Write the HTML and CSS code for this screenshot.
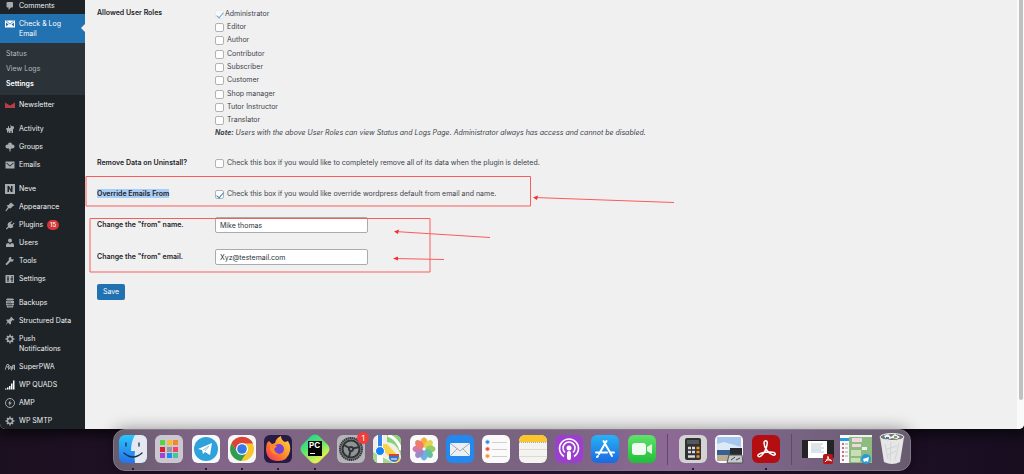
FILE: index.html
```html
<!DOCTYPE html>
<html lang="en">
<head>
<meta charset="utf-8">
<title>Check &amp; Log Email Settings</title>
<link rel="stylesheet" href="styles.css">
</head>
<body>
<div class="window">
  <nav class="menu" aria-label="Admin menu">
    <a class="item" href="#"><svg class="ico" viewBox="0 0 20 20"><path d="M5 2h9q2 0 2 2v7q0 2-2 2h-2l-5 5v-5H5q-2 0-2-2V4q0-2 2-2z"/></svg><span>Comments</span></a>
    <a class="item current" href="#"><svg class="ico" viewBox="0 0 20 20"><path fill-rule="evenodd" d="M0 3h20v14H0zM2 4l8 7 8-7-1-.5-7 6-7-6zM2 7v8l5-4zM18 7v8l-5-4z"/></svg><span>Check &amp; Log Email</span></a>
    <div class="submenu">
      <a href="#">Status</a>
      <a href="#">View Logs</a>
      <a class="active" href="#">Settings</a>
    </div>
    <a class="item" href="#"><svg class="ico news" viewBox="0 0 20 20"><path d="M0 5l10 6 10-6v11H0z"/></svg><span>Newsletter</span></a>

    <a class="item first" href="#"><svg class="ico" viewBox="0 0 20 20"><path d="M11 1l2 3 5 1v4l-2 1v8h-3v-4h-2v4H8v-4H7v3H4v-5l-2-1 1-3h3V4l2 1v3h3z"/></svg><span>Activity</span></a>
    <a class="item" href="#"><svg class="ico" viewBox="0 0 20 20"><circle cx="10" cy="5" r="4"/><circle cx="5" cy="9" r="4"/><circle cx="15" cy="9" r="4"/><path d="M7 8h6v5l-2 2v4H9v-4l-2-2z"/></svg><span>Groups</span></a>
    <a class="item" href="#"><svg class="ico" viewBox="0 0 20 20"><path fill-rule="evenodd" d="M1 3h18v14H1zM3 5v2l7 6 7-6V5l-7 6z"/></svg><span>Emails</span></a>

    <a class="item first" href="#"><svg class="ico" viewBox="0 0 20 20"><path fill-rule="evenodd" d="M0 0h20v20H0zM5 4v12h3V9l4 7h3V4h-3v7L8 4z"/></svg><span>Neve</span></a>
    <a class="item" href="#"><svg class="ico" viewBox="0 0 20 20"><path d="M12 1l7 6-3 1-5 5-3-1-6 7-1-2 5-7-3-3 4-1z"/></svg><span>Appearance</span></a>
    <a class="item" href="#"><svg class="ico" viewBox="0 0 20 20"><path d="M12 2l2 1-3 4 3 2 4-4 1 2-4 4 2 2c-3 4-7 4-9 2l-5 4-1-2 4-4C4 9 6 5 9 4l1 1z"/></svg><span>Plugins <b class="badge">15</b></span></a>
    <a class="item" href="#"><svg class="ico" viewBox="0 0 20 20"><circle cx="10" cy="5" r="4"/><path d="M2 18v-4q0-4 5-4l3 3 3-3q5 0 5 4v4z"/></svg><span>Users</span></a>
    <a class="item" href="#"><svg class="ico" viewBox="0 0 20 20"><path d="M17 6l-3 1-2-2 1-3c-4-1-7 2-5 6l-7 8q1 3 3 2l7-7c4 1 7-1 6-5z"/></svg><span>Tools</span></a>
    <a class="item" href="#"><svg class="ico" viewBox="0 0 20 20"><path fill-rule="evenodd" d="M1 2h17v16H1zM5 4v5H4v2h1v5h2v-5h1V9H7V4zM13 4v5h-2v2h2v5h2v-5h1V9h-1V4z"/></svg><span>Settings</span></a>

    <a class="item first" href="#"><svg class="ico" viewBox="0 0 20 20"><path d="M4 1h12l2 2-2 2H4L2 3zM2 6h16v4H2zM2 11h16v3H2zM3 15h14l-1 4H4z"/><path class="cut" d="M4 8h8M5 12h9M6 16h8"/></svg><span>Backups</span></a>
    <a class="item" href="#"><svg class="ico" viewBox="0 0 20 20"><path d="M12 1l7 7-2 1-2-1-3 4v4l-2 1-4-4-5 6 4-8-3-3 2-1h4l3-3z"/></svg><span>Structured Data</span></a>
    <a class="item" href="#"><svg class="ico" viewBox="0 0 20 20"><circle class="ring" cx="10" cy="10" r="5"/><path class="teeth" d="M10 1v4M10 15v4M1 10h4M15 10h4M4 4l2 2M14 14l2 2M16 4l-2 2M6 14l-2 2"/></svg><span>Push Notifications</span></a>
    <a class="item" href="#"><svg class="ico" viewBox="0 0 20 20"><path class="pwa" d="M0 16L4 5h3q2 3-1 5H3M8 6l-1 9 5-7v7l4-9M13 17l4-11h2v10M14 12h5"/></svg><span>SuperPWA</span></a>
    <a class="item" href="#"><svg class="ico bars" viewBox="0 0 20 20"><path d="M0 17h3v2H0zM4 15h3v4H4zM8 12h3v7H8zM12 7h3v12h-3zM16 1h3v18h-3z"/></svg><span>WP QUADS</span></a>
    <a class="item" href="#"><svg class="ico" viewBox="0 0 20 20"><circle class="thin" cx="10" cy="10" r="9"/><path d="M11 4l-5 7h3l-1 5 6-7h-4z"/></svg><span>AMP</span></a>
    <a class="item" href="#"><svg class="ico" viewBox="0 0 20 20"><circle class="ring" cx="10" cy="10" r="5"/><path class="teeth" d="M10 1v4M10 15v4M1 10h4M15 10h4M4 4l2 2M14 14l2 2M16 4l-2 2M6 14l-2 2"/></svg><span>WP SMTP</span></a>
  </nav>

  <main class="content">
    <form class="form">
      <div class="row top">
        <h2 class="head">Allowed User Roles</h2>
        <div>
          <div class="roles">
            <label class="check admin"><input type="checkbox" checked disabled>Administrator</label>
            <label class="check"><input type="checkbox">Editor</label>
            <label class="check"><input type="checkbox">Author</label>
            <label class="check"><input type="checkbox">Contributor</label>
            <label class="check"><input type="checkbox">Subscriber</label>
            <label class="check"><input type="checkbox">Customer</label>
            <label class="check"><input type="checkbox">Shop manager</label>
            <label class="check"><input type="checkbox">Tutor Instructor</label>
            <label class="check"><input type="checkbox">Translator</label>
          </div>
          <p class="note"><b>Note:</b> Users with the above User Roles can view Status and Logs Page. Administrator always has access and cannot be disabled.</p>
        </div>
      </div>
      <div class="row">
        <h2 class="head">Remove Data on Uninstall?</h2>
        <label class="check"><input type="checkbox">Check this box if you would like to completely remove all of its data when the plugin is deleted.</label>
      </div>
      <div class="row">
        <h2 class="head"><mark>Override Emails From</mark></h2>
        <label class="check"><input type="checkbox" checked>Check this box if you would like override wordpress default from email and name.</label>
      </div>
      <div class="row">
        <label class="head" for="from-name">Change the "from" name.</label>
        <input class="field" id="from-name" type="text" value="Mike thomas">
      </div>
      <div class="row">
        <label class="head" for="from-email">Change the "from" email.</label>
        <input class="field" id="from-email" type="text" value="Xyz@testemail.com">
      </div>
      <button class="save" type="button">Save</button>
    </form>
    <svg class="marks" width="620" height="300" viewBox="0 0 620 300" aria-hidden="true">
      <path class="box" d="M1 176.500h444.500v29.500H1zM5 218.500h340v53.500H5z"/>
      <path class="arrow" d="M449 197.500l140 5M310 231.500l95 6M309 258.500l50 1"/>
      <path class="tip" d="M448 197.500l5-2-1 4.500zM309 231.500l5-2-1 4.500zM308 258.500l5-2v4z"/>
    </svg>
  </main>
  <div class="scroll"><div class="thumb"></div></div>
</div>

<div class="shelf">
<div class="dock">
  <div class="apps main-apps">
    <a class="app open" href="#" aria-label="Finder"><svg viewBox="0 0 28 28"><defs><linearGradient id="g1" x2="0" y2="1"><stop stop-color="#2bc5fb"/><stop offset="1" stop-color="#2472ea"/></linearGradient><clipPath id="r"><rect width="28" height="28" rx="6"/></clipPath></defs><g clip-path="url(#r)"><path fill="url(#g1)" d="M0 0h28v28H0z"/><path fill="#e4e8f0" d="M16 0q-4 7-4 16h4q-1 6 0 12h12V0z"/><path d="M7 8v3M20 8v3M5 18q9 8 18 0" fill="none" stroke="#1d3048" stroke-width="1.300" stroke-linecap="round"/></g></svg></a>
    <a class="app" href="#" aria-label="Launchpad"><svg viewBox="0 0 28 28"><rect width="28" height="28" rx="6" fill="#ccc6d0"/><path fill="#54d44c" d="M5 5h5v5H5z"/><path fill="#f9bc2e" d="M12 5h5v5h-5z"/><path fill="#f28a25" d="M18 5h5v5h-5z"/><path fill="#d8222e" d="M5 12h5v5H5z"/><path fill="#96989e" d="M12 12h5v5h-5z"/><path fill="#f64266" d="M18 12h5v5h-5z"/><path fill="#a145d3" d="M5 18h5v5H5z"/><path fill="#1d8cf5" d="M12 18h5v5h-5z"/><path fill="#3ccc98" d="M18 18h5v5h-5z"/></svg></a>
    <a class="app open" href="#" aria-label="Telegram"><svg viewBox="0 0 28 28"><rect width="28" height="28" rx="6" fill="#f7f9fb"/><circle cx="14" cy="14" r="12" fill="#2fa2db"/><path fill="#fff" d="M6 14l14-6-2 12-5-3-2 2-1-4z"/><path d="M11 15l6-4-4 5" fill="none" stroke="#9cc8e0"/></svg></a>
    <a class="app open" href="#" aria-label="Chrome"><svg viewBox="0 0 28 28"><rect width="28" height="28" rx="6" fill="#f7f7f7"/><circle cx="14" cy="14" r="12" fill="#f6c72f"/><path fill="#dc4437" d="M3.500 8.500a12 12 0 0 1 21.500 0H14l-5 8z"/><path fill="#2f9d57" d="M3.500 8.500A12 12 0 0 0 13 26l6-9-10-1z"/><circle cx="14" cy="14" r="6" fill="#fff"/><circle cx="14" cy="14" r="4.800" fill="#3579e8"/></svg></a>
    <a class="app open" href="#" aria-label="Firefox"><svg viewBox="0 0 28 28"><defs><linearGradient id="g2" x1="1" x2="0" y2="1"><stop stop-color="#ffe14a"/><stop offset=".5" stop-color="#ff8a26"/><stop offset="1" stop-color="#f02b5f"/></linearGradient></defs><rect width="28" height="28" rx="6" fill="#251b45"/><path fill="url(#g2)" d="M3 8l2-2 3 3 3-1q1-5 6-7 0 4 4 6l3-1q3 5 2 10-2 10-12 10Q3 26 2 15q0-4 1-7z"/><circle cx="15" cy="14" r="5" fill="#7542d8"/><path fill="#ff8a26" d="M6 10l7 1-3 3q1 4 5 5-7 2-9-5z"/></svg></a>
    <a class="app open" href="#" aria-label="PyCharm"><svg viewBox="0 0 28 28"><defs><linearGradient id="g3" x2="1" y2=".3"><stop stop-color="#22d98c"/><stop offset=".5" stop-color="#5fe26c"/><stop offset="1" stop-color="#d8f054"/></linearGradient></defs><rect x="2" y="2" width="24" height="24" rx="6" transform="rotate(45 14 14)" fill="url(#g3)"/><path fill="#050505" d="M7 6h14v15H7z"/><text class="pc" x="8" y="13">PC</text><path fill="#fff" d="M9 18h5v1H9z"/></svg></a>
    <a class="app" href="#" aria-label="System Preferences, 1 notification"><svg viewBox="0 0 28 28"><rect width="28" height="28" rx="6" fill="#b3b5b7"/><circle cx="14" cy="14" r="11" fill="#85898c" stroke="#33383b" stroke-width="2" stroke-dasharray="1.500 .5"/><circle cx="14" cy="14" r="8.500" fill="#8e9396" stroke="#303437" stroke-width="2"/><path d="M14 14L7 10M14 14l8-2M14 14l-2 8" stroke="#303437" stroke-width="2"/><circle cx="14" cy="14" r="3" fill="#303437"/><circle cx="14" cy="14" r="1" fill="#9ba0a3"/></svg><span class="count">1</span></a>
    <a class="app" href="#" aria-label="Maps"><svg viewBox="0 0 28 28"><g clip-path="url(#r)"><path fill="#f0eee6" d="M0 0h28v28H0z"/><path fill="#88d276" d="M14 0h14v22Q25 8 14 7z"/><path d="M15 0q10 4 13 15" fill="none" stroke="#fff" stroke-width="3"/><path fill="#f8d34a" d="M10 9h4l14 15v4h-6L10 15z"/><path fill="#a4d989" d="M0 17l20 11H0z"/><path fill="#fff" d="M4 0h6v28H4z"/><path fill="#3084ee" d="M5 0h4v15H5z"/><circle cx="7" cy="16" r="4.500" fill="#1682f5" stroke="#fff"/><path fill="#3377c9" d="M16 20q5 1 10-1 1 7-5 8-6-1-5-7z"/><path fill="#dc403c" d="M16 19h10v2H16z"/><path stroke="#fff" d="M18 24h6"/></g></svg></a>
    <a class="app" href="#" aria-label="Photos"><svg viewBox="0 0 28 28"><rect width="28" height="28" rx="6" fill="#fafafa"/><g opacity=".85"><ellipse cx="14" cy="7.500" rx="3.500" ry="5" fill="#f6a023"/><ellipse cx="14" cy="7.500" rx="3.500" ry="5" fill="#dfcf32" transform="rotate(45 14 14)"/><ellipse cx="14" cy="7.500" rx="3.500" ry="5" fill="#86c34c" transform="rotate(90 14 14)"/><ellipse cx="14" cy="7.500" rx="3.500" ry="5" fill="#4bb592" transform="rotate(135 14 14)"/><ellipse cx="14" cy="7.500" rx="3.500" ry="5" fill="#58a2e1" transform="rotate(180 14 14)"/><ellipse cx="14" cy="7.500" rx="3.500" ry="5" fill="#8778c3" transform="rotate(225 14 14)"/><ellipse cx="14" cy="7.500" rx="3.500" ry="5" fill="#c764a1" transform="rotate(270 14 14)"/><ellipse cx="14" cy="7.500" rx="3.500" ry="5" fill="#ee6651" transform="rotate(315 14 14)"/></g></svg></a>
    <a class="app" href="#" aria-label="Mail"><svg viewBox="0 0 28 28"><rect width="28" height="28" rx="6" fill="#2489ef"/><rect x="4" y="8" width="20" height="13" rx="1.500" fill="#edf0f3"/><path d="M4.500 8.500L14 16l9.500-7.500M4.500 20.500l7-7M23.500 20.500l-7-7" fill="none" stroke="#a5adb7"/></svg></a>
    <a class="app" href="#" aria-label="Reminders"><svg viewBox="0 0 28 28"><rect width="28" height="28" rx="6" fill="#fafafa"/><path stroke="#cfcfcf" d="M10 7.500h15M10 14.500h15M10 21.500h15"/><circle cx="5.500" cy="7" r="2" fill="#2882f4" stroke="#acd0fb"/><circle cx="5.500" cy="14" r="2" fill="#ed463d" stroke="#f8b6b3"/><circle cx="5.500" cy="21" r="2" fill="#ee9530" stroke="#f8d4ad"/></svg></a>
    <a class="app" href="#" aria-label="Notes"><svg viewBox="0 0 28 28"><g clip-path="url(#r)"><path fill="#f4f3ef" d="M0 0h28v28H0z"/><path fill="#fbc62d" d="M0 0h28v7H0z"/><path stroke="#aaa598" stroke-dasharray="1 1" d="M0 7.500h28"/><path stroke="#dcdad5" d="M0 14.500h28M0 21.500h28"/></g></svg></a>
    <a class="app" href="#" aria-label="Podcasts"><svg viewBox="0 0 28 28"><rect width="28" height="28" rx="6" fill="#9c3fce"/><g fill="none" stroke="#fff" stroke-width="1.500"><path d="M9 21.500a9.500 9.500 0 1 1 10 0"/><path d="M10 17.500a6 6 0 1 1 8 0"/></g><circle cx="14" cy="13" r="2.500" fill="#fff"/><rect x="12" y="16" width="4" height="9" rx="2" fill="#fff"/></svg></a>
    <a class="app" href="#" aria-label="App Store"><svg viewBox="0 0 28 28"><defs><linearGradient id="g4" x2="0" y2="1"><stop stop-color="#28b2f4"/><stop offset="1" stop-color="#1b69df"/></linearGradient></defs><rect width="28" height="28" rx="6" fill="url(#g4)"/><path d="M15.500 6L8 19M12.500 6l8.500 15M5 17.500h11M20 17.500h3M7 21l-1 1" fill="none" stroke="#fff" stroke-width="2" stroke-linecap="round"/></svg></a>
    <a class="app" href="#" aria-label="FaceTime"><svg viewBox="0 0 28 28"><defs><linearGradient id="g5" x2="0" y2="1"><stop stop-color="#60e16a"/><stop offset="1" stop-color="#22bd3a"/></linearGradient></defs><rect width="28" height="28" rx="6" fill="url(#g5)"/><rect x="4" y="8" width="14" height="12" rx="3" fill="#f1faf1"/><path fill="#e0f5e2" d="M19 12l5-3v10l-5-3z"/></svg></a>
  </div>
  <span class="rule"></span>
  <div class="apps">
    <a class="app open" href="#" aria-label="Calculator"><svg viewBox="0 0 28 28"><rect width="28" height="28" rx="6" fill="#d3d3d3"/><rect x="6" y="3" width="16" height="22" rx="2" fill="#303133"/><path fill="#56595b" d="M8 5h12v4H8z"/><path d="M9 13h3M13 13h3M9 17h3M13 17h3M9 21.500h7" stroke="#d9d9d9" stroke-width="2.500"/><path d="M17.500 13h3M17.500 17h3M17.500 21.500h3" stroke="#f59323" stroke-width="2.500"/></svg></a>
    <a class="app" href="#" aria-label="Preview"><svg viewBox="0 0 28 28"><rect width="28" height="28" rx="5" fill="#f7f7f7"/><path fill="#a5c7ef" d="M2 2h24v13H2z"/><path fill="#dceaf8" d="M2 9l7-2 17 5v3H2z"/><path fill="#3a608f" d="M2 15h24v5H2z"/><path fill="#b9aa92" d="M2 20h24v6H2z"/><path fill="#26292d" d="M15 13h12v7H15z"/><path fill="#c5c9cb" stroke="#555" d="M14 20h13l1 8H12z"/><path stroke="#444" d="M16 25l4-3M21 25l4-2"/></svg></a>
    <a class="app open" href="#" aria-label="Acrobat"><svg viewBox="0 0 28 28"><rect width="28" height="28" rx="6" fill="#b30f12"/><path d="M13 6c3-1 3 3 0 10-3 5-6 7-7 5s5-4 12-4 6 4 3 3c-4-1-9-7-9-12q0-2 1-2z" fill="none" stroke="#fff" stroke-width="1.500"/></svg></a>
  </div>
  <span class="rule"></span>
  <div class="apps">
    <a class="app thumbnail" href="#" aria-label="Document window"><svg viewBox="0 0 32 28"><path fill="#242425" d="M0 5h32v18H0z"/><path fill="#fff" d="M6 6h19v17H6z"/><path d="M9 9h12M9 11h10M9 13h13M9 17h13" stroke="#c0c8cf"/><path stroke="#9bc5e5" d="M9 15h10"/><rect x="21" y="19" width="10" height="10" rx="2" fill="#b71518"/><path d="M26 21q1 3-3 6M26 22q0 3 4 4M24 25h5" fill="none" stroke="#fff"/></svg></a>
    <a class="app thumbnail" href="#" aria-label="Telegram window"><svg viewBox="0 0 32 28"><path fill="#f8f9fa" d="M0 0h32v28H0z"/><path fill="#8dbb80" d="M9 0h23v28H9z"/><path fill="#c8dfb5" d="M11 15h10v6H11zM11 23h9v4h-9z"/><path fill="#f0d6de" d="M12 3h10v4H12zM12 9h9v3h-9z"/><path fill="#eef2ee" d="M9 0h23v2H9zM22 12h5v3h-5z"/><path fill="#279be2" d="M0 3h9v3H0z"/><path d="M2 9h2M2 13h2M2 17h2M2 21h2M2 25h2" stroke="#d16c72" stroke-width="2"/><path d="M5 9h3M5 13h3M5 17h3M5 21h3" stroke="#aaa"/><circle cx="26" cy="24" r="5" fill="#289bd7"/><path fill="#fff" d="M23 24l6-2-1 5-2-1-2 1z"/></svg></a>
    <a class="app bin" href="#" aria-label="Trash"><svg viewBox="0 0 26 32"><path fill="#e6e6e6" d="M1 4h24l-4 25q-8 4-16 0z"/><ellipse cx="13" cy="4" rx="12" ry="3.500" fill="#727679" stroke="#ededed"/><path fill="#f5f5f5" d="M5 3l4-2 3 3 4-3 5 3-3 2-5-1-5 2z"/><path fill="#3978ae" d="M7 4h3v2H7z"/><path fill="#75a754" d="M15 3h3v2h-3z"/><path fill="#d57a6e" d="M12 5h2v1h-2z"/><path d="M6 11l3 15M12 9l-1 19M20 10l-4 17M8 16l10-3M9 22l8-4" stroke="#d2d3d5" fill="none"/></svg></a>
  </div>
</div>
</div>
</body>
</html>
```

FILE: styles.css
```css
* { box-sizing: border-box; }

body {
  margin: 0;
  min-height: 100vh;
  display: flex;
  flex-direction: column;
  overflow: hidden;
  background: linear-gradient(90deg, #1b1020, #2b1535 50%, #180e20);
  color: #3c434a;
  font: 7px/10px Inter, "Liberation Sans", sans-serif;
  font-variation-settings: "opsz" 14;
}

a { color: inherit; text-decoration: none; }
h2, p { margin: 0; font-size: inherit; }

.window {
  flex: 1;
  display: flex;
  min-height: 0;
  overflow: hidden;
  background: #f0f0f1;
  border-radius: 0 0 5px 5px;
  box-shadow: 0 1px 12px 4px #09070c;
}

/* Admin menu */
.menu {
  width: 85px;
  flex: none;
  height: 429px;
  max-height: calc(100vh - 45px);
  overflow: hidden;
  background: #1d2327;
  color: #f0f0f1;
}
.item {
  display: flex;
  gap: 4px;
  padding: 5px 8px 3px 5px;
}
.item:first-child { margin-top: -4px; }
.item.first { margin-top: 6px; }
.ico {
  width: 10px;
  height: 10px;
  flex: none;
  fill: #a7aaad;
}
.news { fill: #b93d43; }
.bars { fill: #fff; }
.ring, .thin, .teeth, .cut, .pwa { fill: none; stroke: #a7aaad; }
.ring { stroke-width: 3; }
.thin { stroke-width: 2; }
.teeth { stroke-width: 3; }
.pwa { stroke-width: 2; }
.cut { stroke: #1d2327; stroke-width: 1; }
.current {
  position: relative;
  padding-bottom: 4px;
  background: #2271b1;
  color: #fff;
}
.current .ico { fill: #fff; }
.current::after {
  content: "";
  position: absolute;
  right: 0;
  top: 10px;
  border: 4px solid transparent;
  border-left: 0;
  border-right-color: #f0f0f1;
}
.submenu {
  display: flex;
  flex-direction: column;
  padding: 3px 6px 4px;
  background: #2c3338;
  color: #b4b9be;
  line-height: 15px;
}
.submenu .active { color: #fff; font-weight: 600; }
.badge {
  display: inline-block;
  margin-left: 2px;
  padding: 0 3px;
  border-radius: 5px;
  background: #d63638;
  color: #fff;
  font-size: 6px;
  font-weight: 500;
}

/* Settings form */
.content {
  flex: 1;
  min-width: 0;
  position: relative;
  padding: 7px 12px;
}
.form {
  display: flex;
  flex-direction: column;
  align-items: flex-start;
  gap: 16px;
}
.row {
  display: grid;
  grid-template-columns: 118px 1fr;
  align-items: center;
  width: 100%;
  min-height: 15px;
}
.top { align-items: start; }
.head {
  color: #1d2327;
  font-weight: 600;
  line-height: 12px;
}
mark { background: #a9cdf5; color: inherit; }
.roles {
  display: grid;
  grid-auto-rows: 1fr;
  height: 120px;
}
.check {
  display: flex;
  align-items: center;
  gap: 3px;
}
.check input {
  appearance: none;
  flex: none;
  display: grid;
  place-items: center;
  width: 9px;
  height: 9px;
  margin: 1px 0 0;
  border: 1px solid #b0b3b6;
  border-radius: 2px;
  background: #fff;
}
.check input:checked::before {
  content: "";
  width: 3px;
  height: 6px;
  margin-bottom: 1px;
  border: solid #3582c4;
  border-width: 0 1px 1px 0;
  transform: rotate(40deg);
}
.check input:disabled { border-color: #e6e8ea; opacity: 0.7; }
.admin { gap: 1px; }
.note { font-style: italic; line-height: 12px; }
.field {
  width: 153px;
  height: 16px;
  margin: 0;
  padding: 0 4px;
  border: 1px solid #a9acaf;
  border-radius: 2px;
  background: #fff;
  color: #2c3338;
  font: inherit;
}
.save {
  margin: 3px 0 0;
  height: 16px;
  padding: 0 6px;
  border: 0;
  border-radius: 2px;
  background: #2271b1;
  color: #fff;
  font: inherit;
}

/* Hand-drawn annotations over the form */
.marks {
  position: absolute;
  left: 0;
  top: 0;
  pointer-events: none;
}
.box, .arrow { fill: none; stroke: #fa5c5c; stroke-width: 1; }
.tip { fill: #fb2c2c; }

.scroll {
  width: 7px;
  flex: none;
  padding: 0 1px 29px 2px;
  background: #fafafa;
}
.thumb {
  height: 100%;
  background: #c1c1c1;
  border-radius: 0 0 2px 2px;
}

/* Dock */
.shelf {
  height: 45px;
  flex: none;
  padding: 0 113px;
}
.dock {
  position: relative;
  display: flex;
  align-items: center;
  height: 42px;
  padding: 0 2px 2px 1px;
  border: 1px solid #85778a;
  border-radius: 12px;
  background: linear-gradient(90deg, #675d6b, #83658a 12%, #7c647f 30%, #7a6380 55%, #8d6996 70%, #7c6588 82%, #675b6e);
  box-shadow: 0 0 16px rgba(0, 0, 0, 0.4);
}
.apps {
  flex: 3 1 0;
  display: flex;
  justify-content: space-around;
  align-items: center;
}
.main-apps { flex-grow: 15; }
.app {
  position: relative;
  width: 28px;
  height: 28px;
}
.app svg { display: block; width: 100%; height: 100%; overflow: visible; }
.thumbnail { width: 32px; }
.bin { width: 26px; height: 32px; }
.open::after {
  content: "";
  position: absolute;
  left: 13px;
  bottom: -7px;
  width: 2px;
  height: 2px;
  border-radius: 1px;
  background: #0c080d;
}
.count {
  position: absolute;
  right: -4px;
  top: -3px;
  width: 12px;
  height: 12px;
  border-radius: 6px;
  background: #f03d3c;
  color: #fff;
  font-size: 8px;
  line-height: 12px;
  text-align: center;
}
.pc { fill: #fff; font-size: 8px; font-weight: 700; }
.rule {
  width: 1px;
  height: 31px;
  margin: 0 7px;
  background: #5d4c68;
}
```
